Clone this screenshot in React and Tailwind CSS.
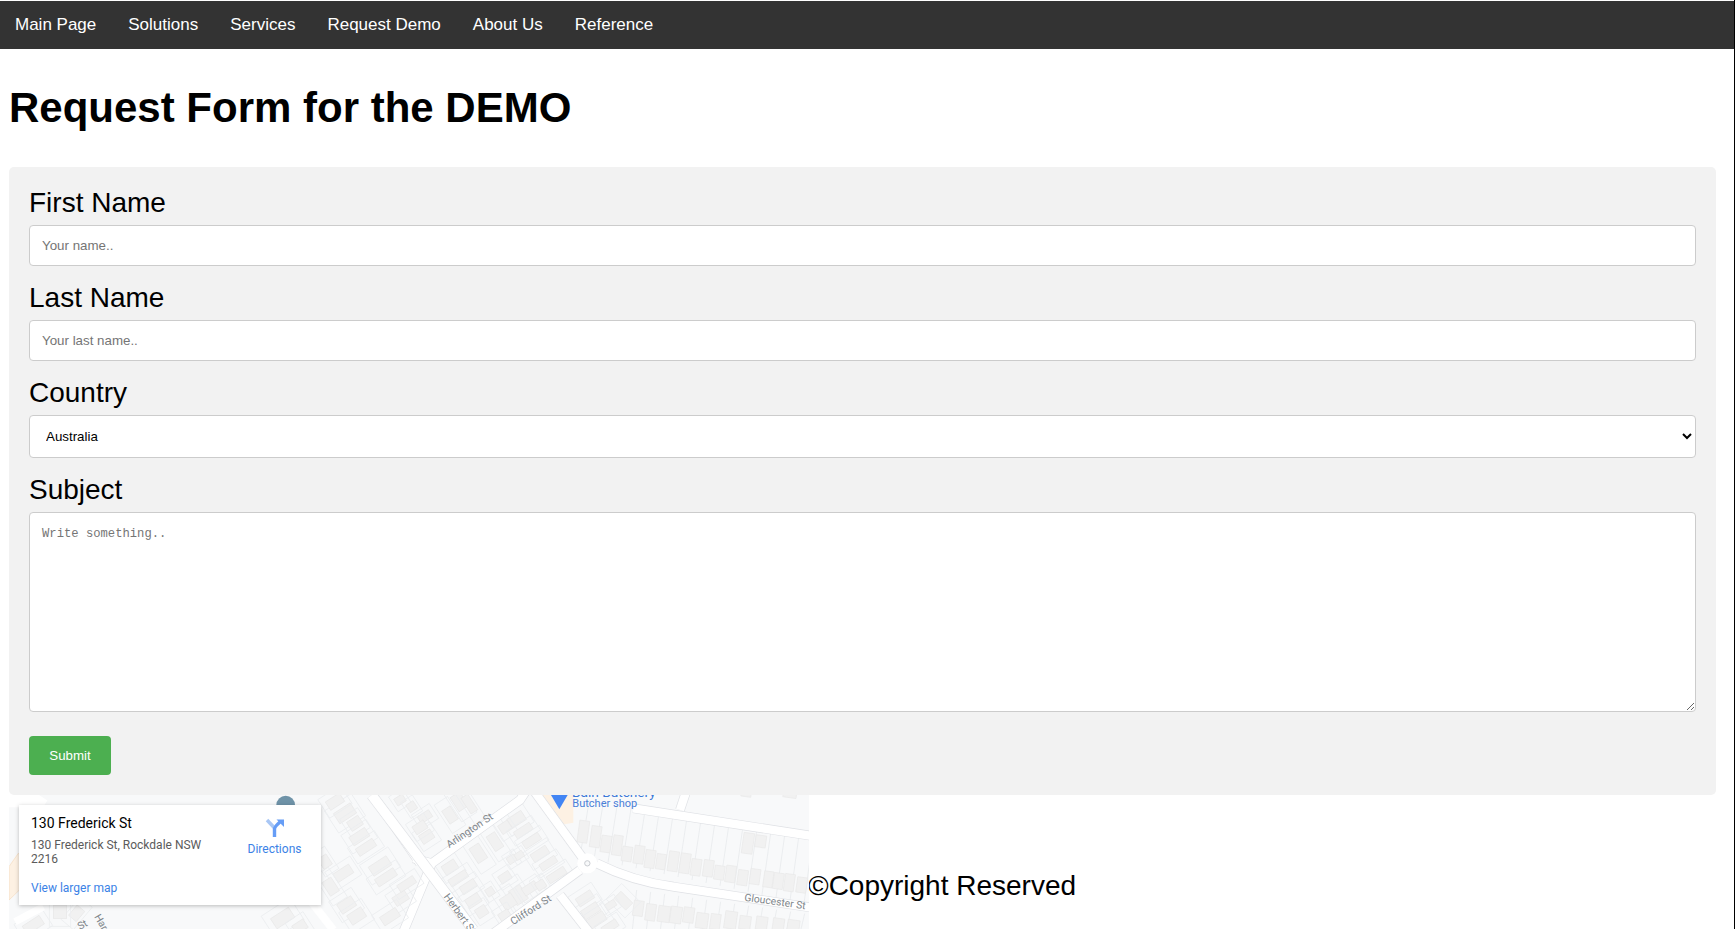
const navItems = ['Main Page', 'Solutions', 'Services', 'Request Demo', 'About Us', 'Reference'];

// map data is in zoomed pixels (3x), offset per group below
const roadsEast = [
  'M-60 480 L35 250 L300 60 L340 0',
  'M340 30 L500 250',
  'M-20 235 L35 250',
  'M530 250 C600 285 680 310 760 320 L1190 385',
  'M480 270 L220 460',
  'M420 345 L510 460',
  'M640 85 L1190 170',
  'M800 30 L780 90',
  'M0 250 L-110 90',
];

const buildingsEast = [
  [490, 155, 30, 66, 8], [527, 170, 30, 64, 8], [558, 192, 30, 50, 8], [592, 196, 28, 60, 8], [621, 222, 30, 44, 8],
  [657, 224, 30, 54, 8], [690, 237, 30, 54, 8], [723, 245, 28, 46, 8], [760, 244, 30, 60, 8], [795, 250, 30, 60, 8],
  [828, 262, 30, 50, 8], [865, 265, 30, 50, 8], [898, 278, 30, 42, 8], [932, 282, 30, 50, 8], [968, 293, 30, 46, 8],
  [1005, 290, 30, 46, 8], [1045, 298, 28, 48, 8], [1075, 303, 30, 48, 8], [1108, 308, 30, 52, 8], [1145, 315, 30, 46, 8],
  [984, 190, 32, 62, 8], [1022, 184, 32, 36, 8], [655, 385, 30, 46, 8], [692, 397, 30, 50, 8], [732, 402, 36, 48, 8],
  [768, 405, 34, 50, 8], [806, 405, 32, 46, 8], [846, 422, 36, 46, 8], [886, 425, 30, 46, 8], [932, 420, 36, 52, 8],
  [975, 428, 34, 40, 8], [1025, 430, 34, 40, 8], [1075, 435, 34, 40, 8], [1120, 440, 36, 40, 8],
  [980, 30, 30, 40, 8], [1110, 40, 40, 26, 8],
];

const buildingsBlock = [
  [290, 118, 50, 32, -33], [255, 142, 34, 30, -33], [310, 152, 56, 24, -33], [225, 185, 30, 52, -33], [335, 182, 56, 24, -33],
  [175, 220, 34, 52, -33], [360, 222, 54, 28, -33], [385, 250, 54, 22, -33], [90, 262, 44, 32, -33], [115, 295, 60, 24, -33],
  [145, 320, 50, 26, -33], [410, 285, 60, 24, -33], [255, 292, 36, 26, -33], [160, 362, 44, 30, -33], [295, 345, 40, 50, -33],
  [265, 365, 40, 40, -33], [330, 325, 46, 26, -33], [362, 315, 28, 26, -33], [210, 335, 24, 24, -33], [275, 238, 26, 22, -33],
  [298, 226, 26, 20, -33], [255, 408, 34, 30, -33], [185, 395, 34, 30, -33], [495, 355, 52, 28, -33], [610, 362, 50, 30, 45],
  [512, 392, 54, 30, -33], [572, 375, 32, 20, -33], [530, 420, 56, 30, -33], [570, 440, 50, 24, -33],
  [90, 105, 30, 46, -33], [118, 65, 34, 50, -33], [148, 72, 24, 56, -33], [15, 110, 40, 24, -33], [20, 170, 40, 30, -33],
];

const buildingsMid = [
  [315, 70, 60, 36, -33], [345, 100, 40, 32, -33], [358, 140, 56, 30, -33], [378, 172, 60, 26, -33], [420, 228, 64, 32, -33],
  [438, 262, 66, 26, -33], [310, 250, 56, 30, -33], [272, 290, 32, 48, -33], [482, 325, 44, 30, -33], [500, 282, 56, 24, -33],
  [320, 345, 50, 34, -33], [350, 378, 50, 34, -33], [128, 384, 64, 36, -33], [255, 215, 30, 36, -33], [285, 35, 50, 30, -33],
  [480, 30, 30, 24, -33], [515, 50, 26, 26, -33], [540, 112, 40, 28, -33], [180, 410, 40, 30, -33], [450, 380, 56, 30, -33],
];

const lotsWest = [[100, 405, 60, 30, -33], [230, 370, 30, 40, 40], [180, 365, 40, 40, 0]];

// narrow plots either side of Gloucester St
const plotsNorth = Array.from({ length: 18 }, (_, i) => 480 + i * 42);
const plotsSouth = Array.from({ length: 14 }, (_, i) => 640 + i * 42);

function Building({ b, lot }) {
  const [cx, cy, w, h, a] = b;
  return (
    <g transform={`rotate(${a} ${cx} ${cy})`}>
      {lot && <rect x={cx - w * 0.8} y={cy - h * 1.1} width={w * 1.6} height={h * 2.2} fill="none" stroke="#eceef0" strokeWidth="2.5" />}
      <rect x={cx - w / 2} y={cy - h / 2} width={w} height={h} fill="#f1f1f1" stroke="#e8e8e8" strokeWidth="2" />
    </g>
  );
}

function MapDrawing() {
  return (
    <svg viewBox="27 2385 2400 402" className="block h-[134px] w-[800px] bg-[#f8f9fa]">
      {/* poi blocks */}
      <path d="M1625 2385 L1720 2385 L1720 2468 L1680 2475 Z" fill="#fdf1e3" />
      <path d="M27 2600 L55 2560 L110 2620 L27 2700 Z" fill="#fdf1e3" stroke="#f6dcc0" strokeWidth="2" />

      <g transform="translate(1260 2340)">
        {plotsNorth.map((x) => (
          <path key={x} d={`M${x + 28} ${85 + (x - 640) * 0.155} L${x} ${240 + (x - 530) * 0.21}`} stroke="#e8eaed" strokeWidth="2.5" />
        ))}
        {plotsSouth.map((x) => (
          <path key={x} d={`M${x + 10} ${330 + (x - 640) * 0.14} L${x - 4} 460`} stroke="#e8eaed" strokeWidth="2.5" />
        ))}
        {buildingsEast.map((b, i) => <Building key={i} b={b} />)}
        {buildingsBlock.map((b, i) => <Building key={i} b={b} lot />)}
        {roadsEast.map((d) => <path key={d} d={d} fill="none" stroke="#dfe1e5" strokeWidth="29" />)}
        {roadsEast.map((d) => <path key={d} d={d} fill="none" stroke="#ffffff" strokeWidth="25" />)}
        <circle cx="502" cy="250" r="30" fill="#ffffff" />
        <circle cx="502" cy="250" r="8" fill="#f8f9fa" stroke="#c9ccd1" strokeWidth="3" />
      </g>

      <g transform="translate(720 2370)">
        {buildingsMid.map((b, i) => <Building key={i} b={b} lot />)}
      </g>

      <g transform="translate(0 2370)">
        {lotsWest.map((b, i) => <Building key={i} b={b} lot />)}
        <path d="M45 395 L130 350" fill="none" stroke="#ffffff" strokeWidth="22" />
        <path d="M20 30 L100 30 L130 50" fill="none" stroke="#ffffff" strokeWidth="44" />
      </g>

      {/* roads crossing the west half */}
      <path d="M1115 2385 L1420 2790" fill="none" stroke="#dfe1e5" strokeWidth="33" />
      <path d="M1115 2385 L1420 2790" fill="none" stroke="#ffffff" strokeWidth="29" />
      <path d="M930 2700 L1000 2790" fill="none" stroke="#ffffff" strokeWidth="24" />

      <circle cx="857" cy="2415" r="28" fill="#6f93a8" />

      {/* pin */}
      <path d="M1653 2385 L1703 2385 L1678 2428 Z" fill="#4285f4" />
      <text x="1716" y="2392" fontFamily="Roboto, sans-serif" fontSize="41" fill="#3b78d8">Bain Butchery</text>
      <text x="1717" y="2420" fontFamily="Roboto, sans-serif" fontSize="33" fill="#4a80d8">Butcher shop</text>

      <g fontFamily="Roboto, sans-serif" fontSize="31" fill="#80868b">
        <text transform="translate(1348 2545) rotate(-34)">Arlington St</text>
        <text transform="translate(1330 2690) rotate(54)">Herbert St</text>
        <text transform="translate(1540 2776) rotate(-33)">Clifford St</text>
        <text transform="translate(2232 2702) rotate(8)">Gloucester St</text>
        <text transform="translate(282 2750) rotate(60)">Harris</text>
        <text transform="translate(240 2790) rotate(-30)">St</text>
      </g>
    </svg>
  );
}

function DirectionsIcon() {
  return (
    <svg viewBox="0 0 20 20" className="h-[20px] w-[20px]">
      <path d="M2 2 L9.5 10" fill="none" stroke="#a9c7f5" strokeWidth="3.4" />
      <path d="M9.5 19 V11 C9.5 9 11 7.5 15 4" fill="none" stroke="#669df6" strokeWidth="3.4" />
      <path d="M11.5 1.5 H19 V9 Z" fill="#669df6" />
    </svg>
  );
}

function MapCard() {
  return (
    <div className="absolute left-[10px] top-[10px] flex h-[100px] w-[302px] bg-white font-['Roboto',sans-serif] shadow-[0_1px_4px_rgba(0,0,0,0.25)]">
      <div className="w-[205px] pl-[12px] pt-[8px]">
        <div className="text-[14px] font-normal leading-[20px] text-black">130 Frederick St</div>
        <div className="mt-[5px] text-[12px] leading-[14px] text-[#5b5b5b]">130 Frederick St, Rockdale NSW 2216</div>
        <div className="mt-[15px] text-[12px] leading-[14px] text-[#3b82e6]">View larger map</div>
      </div>
      <div className="flex flex-1 flex-col items-center pl-[4px] pt-[13px]">
        <DirectionsIcon />
        <div className="mt-[4px] text-[12px] leading-[14px] text-[#3b82e6]">Directions</div>
      </div>
    </div>
  );
}

function Field({ label, children, last }) {
  return (
    <div className={last ? '' : 'mb-[16px]'}>
      <label className="mb-[6px] block text-[28px] leading-[32px] text-black">{label}</label>
      {children}
    </div>
  );
}

export default function App() {
  const inputCls = 'block w-full rounded-[4px] border border-[#cccccc] bg-white text-black outline-none placeholder:text-[#757575]';

  return (
    <div className="h-screen w-[1735px] overflow-hidden border-r border-black bg-white pt-px font-['Liberation_Sans',Arial,sans-serif]">
      {/* Nav */}
      <nav className="flex h-[48px] bg-[#333333]">
        {navItems.map((item) => (
          <a key={item} className="px-[16px] text-[17px] leading-[47px] text-white first:pl-[15px]">{item}</a>
        ))}
      </nav>

      <div className="px-[9px]">
        <h1 className="mb-[35px] mt-[35px] text-[42px] font-bold leading-[48px] text-black">Request Form for the DEMO</h1>

        {/* Form */}
        <form className="w-[1707px] rounded-[5px] bg-[#f2f2f2] p-[20px]">
          <Field label="First Name">
            <input className={`${inputCls} h-[41px] px-[12px] text-[13.33px]`} placeholder="Your name.." />
          </Field>
          <Field label="Last Name">
            <input className={`${inputCls} h-[41px] px-[12px] text-[13.33px]`} placeholder="Your last name.." />
          </Field>
          <Field label="Country">
            <select className={`${inputCls} h-[43px] px-[12px] text-[13.33px]`} defaultValue="Australia">
              <option>Australia</option>
              <option>Canada</option>
              <option>USA</option>
            </select>
          </Field>
          <Field label="Subject" last>
            <textarea className={`${inputCls} h-[200px] p-[12px] font-['Liberation_Mono',monospace] text-[12.2px]`} placeholder="Write something.." />
          </Field>
          <button type="button" className="mt-[24px] block h-[39px] w-[82px] rounded-[4px] bg-[#4caf50] text-[13.33px] text-white">Submit</button>
        </form>

        {/* Map + footer */}
        <div className="flex">
          <div className="relative h-[134px] w-[800px] shrink-0 overflow-hidden">
            <MapDrawing />
            <MapCard />
          </div>
          <div className="ml-[-1px] mt-[75px] text-[28px] leading-[32px] text-black">©Copyright Reserved</div>
        </div>
      </div>
    </div>
  );
}
